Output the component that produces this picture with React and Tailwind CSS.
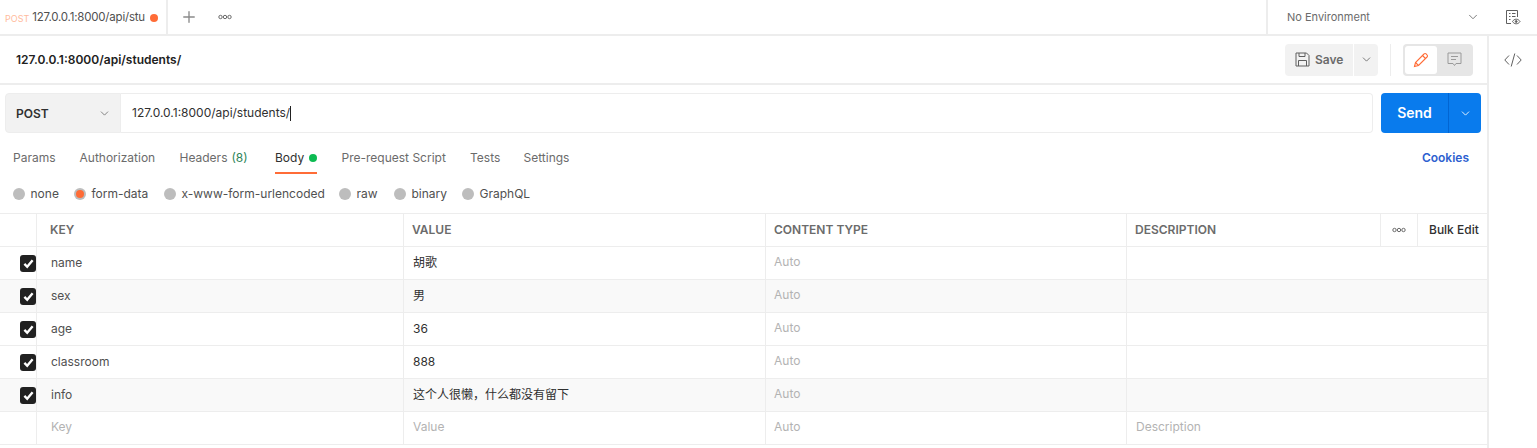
import React from 'react';
import { ChevronDown, Plus } from 'lucide-react';

const FONT = "font-['Inter','Noto_Sans_CJK_SC',sans-serif]";

const rows = [
  { key: 'name', value: '胡歌' },
  { key: 'sex', value: '男', shaded: true },
  { key: 'age', value: '36' },
  { key: 'classroom', value: '888' },
  { key: 'info', value: '这个人很懒，什么都没有留下', shaded: true },
];

const tabs = [
  { label: 'Params', width: 'w-[66.5px]' },
  { label: 'Authorization', width: 'w-[100px]' },
  { label: 'Headers', count: '(8)', width: 'w-[95.5px]' },
  { label: 'Body', active: true, width: 'w-[66.5px]' },
  { label: 'Pre-request Script', width: 'w-[128.5px]' },
  { label: 'Tests', width: 'w-[53.5px]' },
  { label: 'Settings', width: 'w-[70px]' },
];

const radios = [
  { label: 'none', width: 'w-[61px]' },
  { label: 'form-data', active: true, width: 'w-[90px]' },
  { label: 'x-www-form-urlencoded', width: 'w-[175px]' },
  { label: 'raw', width: 'w-[55px]' },
  { label: 'binary', width: 'w-[68px]' },
  { label: 'GraphQL', width: 'w-[80px]' },
];

const Dots = () => (
  <svg width="14" height="6" viewBox="0 0 14 6" fill="none" stroke="#6b6b6b" strokeWidth="1">
    <circle cx="2.5" cy="3" r="1.7" />
    <circle cx="7" cy="3" r="1.7" />
    <circle cx="11.5" cy="3" r="1.7" />
  </svg>
);

const Checkbox = () => (
  <div className="w-[17px] h-[17px] rounded-[3px] bg-[#212121] flex items-center justify-center">
    <svg width="13" height="13" viewBox="0 0 12 12" fill="none" stroke="#fff" strokeWidth="2.2">
      <path d="M2.2 6.4 4.8 9 9.8 3" />
    </svg>
  </div>
);

const Row = ({ keyName, value, shaded, placeholder }) => (
  <div className={`flex h-[33px] border-b border-[#ededed] pb-px ${shaded ? 'bg-[#f9f9f9]' : ''}`}>
    <div className="w-[37px] shrink-0 border-r border-[#ededed] -mb-px flex items-center pl-[20px]">
      {!placeholder && <Checkbox />}
    </div>
    <div className={`w-[367px] shrink-0 border-r border-[#ededed] -mb-px pl-[14px] flex items-center ${placeholder ? 'text-[#b3b3b3] pb-[3px]' : 'text-[#505050] pb-px'}`}>{keyName}</div>
    <div className={`w-[362px] shrink-0 border-r border-[#ededed] -mb-px pl-[9px] flex items-center ${placeholder ? 'text-[#b3b3b3] pb-[3px]' : 'text-[#303030] pb-px'}`}>{value}</div>
    <div className="w-[361px] shrink-0 border-r border-[#ededed] -mb-px pb-[3px] pl-[8px] flex items-center text-[#b3b3b3]">Auto</div>
    <div className="flex-1 pl-[9px] pb-[2px] flex items-center text-[#b3b3b3]">{placeholder ? 'Description' : ''}</div>
  </div>
);

const App = () => {
  return (
    <div className={`${FONT} w-[1537px] h-[448px] overflow-hidden bg-white text-[13px] leading-none`}>
      {/* Top tab strip */}
      <div className="flex h-9 border-b-2 border-[#ededed]">
        <div className="w-[168px] h-[36px] border-r-2 border-[#ededed] flex items-center pl-[5px]">
          <span className="text-[9px] text-[#ffbb9d] mr-[3px]">POST</span>
          <span className="text-[#505050] text-[11.5px] tracking-[-0.2px] whitespace-nowrap">127.0.0.1:8000/api/stu</span>
          <span className="ml-[5px] w-2 h-2 rounded-full bg-[#ff6c37] shrink-0" />
        </div>
        <div className="flex items-center flex-1 pl-[13px]">
          <Plus size={18} strokeWidth={1.8} className="text-[#8a8a8a] -ml-px" />
          <div className="ml-[20px]"><Dots /></div>
        </div>
        <div className="w-[222px] border-l-2 border-[#ededed] flex items-center pl-[19px] pr-[8px] justify-between text-[11px] text-[#6b6b6b]">
          <span>No Environment</span>
          <ChevronDown size={14} strokeWidth={1.5} />
        </div>
        <div className="w-[49px] flex items-center justify-center">
          <svg width="16" height="16" viewBox="0 0 16 16" fill="none" stroke="#5f5f5f" strokeWidth="1">
            <path d="M12.5 8V1.5h-11v13H6" />
            <path d="M4 4.5h1.5M7 4.5h3.5M4 7.5h1.5M7 7.5h3.5M4 10.5h1.5" />
            <path d="M7.5 12.5c1-1.6 2.2-2.3 3.7-2.3s2.8.7 3.8 2.3c-1 1.6-2.3 2.3-3.8 2.3s-2.7-.7-3.7-2.3z" />
            <circle cx="11.2" cy="12.5" r="0.9" fill="#5f5f5f" />
          </svg>
        </div>
      </div>

      <div className="flex">
        <div className="w-[1489px] shrink-0 border-r-2 border-[#ededed] h-[412px]">
          {/* Title row */}
          <div className="h-[49px] border-b-2 border-[#ededed] flex items-center pl-[16px] pr-[14px] justify-between">
            <span className="font-semibold text-[#212121] text-[12px] mt-[1px]">127.0.0.1:8000/api/students/</span>
            <div className="flex items-center">
              <div className="w-[68px] h-8 rounded-l-[4px] bg-[#f2f2f2] flex items-center pl-[10px] font-semibold text-[#6b6b6b] text-[12px] mr-px">
                <svg width="15" height="15" viewBox="0 0 15 15" fill="none" stroke="#5f5f5f" strokeWidth="1" className="mr-[5px]">
                  <path d="M1 1h10.5L14 3.5V14H1z" />
                  <path d="M4 1v3.5h6V1M3.5 14V8.5h8V14" />
                </svg>
                Save
              </div>
              <div className="w-[24px] h-8 rounded-r-[4px] bg-[#f2f2f2] flex items-center justify-center text-[#5f5f5f]">
                <ChevronDown size={13} strokeWidth={1.5} />
              </div>
              <div className="w-px h-8 bg-[#ededed] mx-[12px]" />
              <div className="w-[70px] h-8 rounded-[4px] bg-[#e6e6e6] flex items-center p-[2px]">
                <div className="w-[32px] h-7 rounded-[3px] bg-white flex items-center justify-center">
                  <svg width="16" height="16" viewBox="0 0 16 16" fill="none" stroke="#ff6c37" strokeWidth="1.1">
                    <path d="M1.5 14.5 2.5 10.5 11 2a1.5 1.5 0 0 1 2.2 0l.8.8a1.5 1.5 0 0 1 0 2.2L5.5 13.5z" />
                    <path d="M9.5 3.5l3 3M2.5 10.5l3 3" />
                  </svg>
                </div>
                <div className="flex-1 flex items-center justify-center">
                  <svg width="15" height="15" viewBox="0 0 15 15" fill="none" stroke="#9a9a9a" strokeWidth="1">
                    <path d="M1 1h13v10.5H9l-1.5 2-1.5-2H1z" />
                    <path d="M4 4.5h7M4 7.5h5" />
                  </svg>
                </div>
              </div>
            </div>
          </div>

          {/* Request line */}
          <div className="flex pl-[5px] pr-[6px] pt-[8px] h-[41px] box-content">
            <div className="w-[116px] h-10 shrink-0 bg-[#f2f2f2] border border-[#ededed] rounded-l-[4px] flex items-center justify-between pl-[10px] pr-[9px] pt-px font-semibold text-[#303030] text-[12px]">
              POST
              <ChevronDown size={13} strokeWidth={1.5} className="text-[#6b6b6b]" />
            </div>
            <div className="w-[1252px] h-10 shrink-0 border border-l-0 border-[#ededed] rounded-r-[4px] flex items-center pl-[11px] text-[#303030] text-[12px]">
              127.0.0.1:8000/api/students/
              <span className="w-px h-[15px] bg-[#212121]" />
            </div>
            <div className="ml-[8px] w-[100px] h-10 rounded-[4px] bg-[#097bed] flex text-white">
              <div className="w-[68px] border-r border-[#0265d2] flex items-center justify-center font-semibold text-[14px]">Send</div>
              <div className="flex-1 flex items-center justify-center"><ChevronDown size={13} strokeWidth={1.6} /></div>
            </div>
          </div>

          {/* Tabs */}
          <div className="flex items-center justify-between h-[39px] mt-[4px] pl-[13px] pr-[18px]">
            <div className="flex text-[12px] text-[#6b6b6b]">
              {tabs.map((t) => (
                <div key={t.label} className={`${t.width} relative h-[39px] flex items-center`}>
                  <span className={t.active ? 'text-[#303030]' : ''}>{t.label}</span>
                  {t.count && <span className="ml-[4px] text-[#2f855a]">{t.count}</span>}
                  {t.active && <span className="ml-[5px] w-2 h-2 rounded-full bg-[#0cbb52]" />}
                  {t.active && <span className="absolute left-0 top-[34px] w-[42px] h-[2px] bg-[#ff6c37]" />}
                </div>
              ))}
            </div>
            <span className="font-semibold text-[12px] text-[#2d5fd0]">Cookies</span>
          </div>

          {/* Body type radios */}
          <div className="flex items-center h-[33px] pl-[13px] text-[12px] text-[#505050]">
            {radios.map((r) => (
              <div key={r.label} className={`${r.width} flex items-center whitespace-nowrap`}>
                <span className="w-3 h-3 rounded-full bg-[#bdbdbd] flex items-center justify-center mr-[5.5px] shrink-0">
                  {r.active && <span className="w-2 h-2 rounded-full bg-[#ff6c37]" />}
                </span>
                {r.label}
              </div>
            ))}
          </div>

          {/* Params table */}
          <div className="mt-[3px] border-t border-[#ededed] text-[12px]">
            <div className="flex h-[33px] border-b border-[#ededed] font-semibold text-[#6b6b6b] items-stretch">
              <div className="w-[37px] shrink-0 border-r border-[#ededed]" />
              <div className="w-[367px] shrink-0 border-r border-[#ededed] pl-[13px] flex items-center">KEY</div>
              <div className="w-[362px] shrink-0 border-r border-[#ededed] pl-[8px] flex items-center">VALUE</div>
              <div className="w-[361px] shrink-0 border-r border-[#ededed] pl-[8px] flex items-center">CONTENT TYPE</div>
              <div className="w-[254px] shrink-0 border-r border-[#ededed] pl-[8px] flex items-center">DESCRIPTION</div>
              <div className="w-[37px] shrink-0 border-r border-[#ededed] flex items-center justify-center"><Dots /></div>
              <div className="flex-1 pl-[11px] flex items-center font-medium text-[#303030] text-[12px] whitespace-nowrap">Bulk Edit</div>
            </div>
            {rows.map((r) => (
              <Row key={r.key} keyName={r.key} value={r.value} shaded={r.shaded} />
            ))}
            <Row keyName="Key" value="Value" placeholder />
          </div>
        </div>

        {/* Right rail */}
        <div className="flex-1 flex justify-center pt-[16px]">
          <svg width="18" height="16" viewBox="0 0 18 16" fill="none" stroke="#5f5f5f" strokeWidth="1">
            <path d="M5 3.5.8 8 5 12.5M13 3.5 17.2 8 13 12.5M10.8 1.5 7.2 14.5" />
          </svg>
        </div>
      </div>
    </div>
  );
};

export default App;
